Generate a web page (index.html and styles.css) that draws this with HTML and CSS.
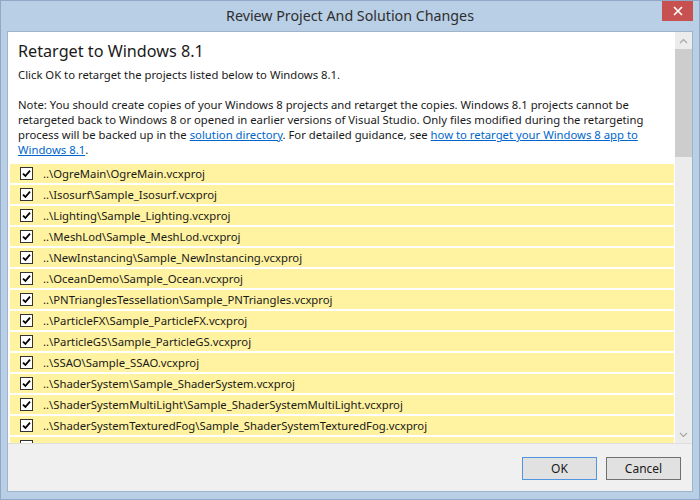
FILE: index.html
```html
<!DOCTYPE html>
<html>
<head>
<meta charset="utf-8">
<link rel="stylesheet" href="styles.css">
</head>
<body>
<div class="window">
  <div class="titlebar">Review Project And Solution Changes</div>
  <div class="close"><svg width="10" height="10" viewBox="0 0 10 10"><path d="M1 1 L9 9 M9 1 L1 9" stroke="#fff" stroke-width="1.7" fill="none"/></svg></div>
  <div class="client">
    <div class="main">
      <div class="content">
        <div class="header">
          <h1 class="heading">Retarget to Windows 8.1</h1>
          <p class="intro">Click OK to retarget the projects listed below to Windows 8.1.</p>
          <p class="note">Note: You should create copies of your Windows 8 projects and retarget the copies. Windows 8.1 projects cannot be<br>retargeted back to Windows 8 or opened in earlier versions of Visual Studio. Only files modified during the retargeting<br>process will be backed up in the <a class="link" href="#">solution directory</a>. For detailed guidance, see <a class="link" href="#">how to retarget your Windows 8 app to</a><br><a class="link" href="#">Windows 8.1</a>.</p>
        </div>
        <div class="list">
          <div class="row"><span class="check"><svg width="11" height="11" viewBox="0 0 11 11"><path d="M2 5.6 L4.4 8 L9 2.6" stroke="#000" stroke-width="1.8" fill="none"/></svg></span><span class="name">..\OgreMain\OgreMain.vcxproj</span></div>
          <div class="row"><span class="check"><svg width="11" height="11" viewBox="0 0 11 11"><path d="M2 5.6 L4.4 8 L9 2.6" stroke="#000" stroke-width="1.8" fill="none"/></svg></span><span class="name">..\Isosurf\Sample_Isosurf.vcxproj</span></div>
          <div class="row"><span class="check"><svg width="11" height="11" viewBox="0 0 11 11"><path d="M2 5.6 L4.4 8 L9 2.6" stroke="#000" stroke-width="1.8" fill="none"/></svg></span><span class="name">..\Lighting\Sample_Lighting.vcxproj</span></div>
          <div class="row"><span class="check"><svg width="11" height="11" viewBox="0 0 11 11"><path d="M2 5.6 L4.4 8 L9 2.6" stroke="#000" stroke-width="1.8" fill="none"/></svg></span><span class="name">..\MeshLod\Sample_MeshLod.vcxproj</span></div>
          <div class="row"><span class="check"><svg width="11" height="11" viewBox="0 0 11 11"><path d="M2 5.6 L4.4 8 L9 2.6" stroke="#000" stroke-width="1.8" fill="none"/></svg></span><span class="name">..\NewInstancing\Sample_NewInstancing.vcxproj</span></div>
          <div class="row"><span class="check"><svg width="11" height="11" viewBox="0 0 11 11"><path d="M2 5.6 L4.4 8 L9 2.6" stroke="#000" stroke-width="1.8" fill="none"/></svg></span><span class="name">..\OceanDemo\Sample_Ocean.vcxproj</span></div>
          <div class="row"><span class="check"><svg width="11" height="11" viewBox="0 0 11 11"><path d="M2 5.6 L4.4 8 L9 2.6" stroke="#000" stroke-width="1.8" fill="none"/></svg></span><span class="name">..\PNTrianglesTessellation\Sample_PNTriangles.vcxproj</span></div>
          <div class="row"><span class="check"><svg width="11" height="11" viewBox="0 0 11 11"><path d="M2 5.6 L4.4 8 L9 2.6" stroke="#000" stroke-width="1.8" fill="none"/></svg></span><span class="name">..\ParticleFX\Sample_ParticleFX.vcxproj</span></div>
          <div class="row"><span class="check"><svg width="11" height="11" viewBox="0 0 11 11"><path d="M2 5.6 L4.4 8 L9 2.6" stroke="#000" stroke-width="1.8" fill="none"/></svg></span><span class="name">..\ParticleGS\Sample_ParticleGS.vcxproj</span></div>
          <div class="row"><span class="check"><svg width="11" height="11" viewBox="0 0 11 11"><path d="M2 5.6 L4.4 8 L9 2.6" stroke="#000" stroke-width="1.8" fill="none"/></svg></span><span class="name">..\SSAO\Sample_SSAO.vcxproj</span></div>
          <div class="row"><span class="check"><svg width="11" height="11" viewBox="0 0 11 11"><path d="M2 5.6 L4.4 8 L9 2.6" stroke="#000" stroke-width="1.8" fill="none"/></svg></span><span class="name">..\ShaderSystem\Sample_ShaderSystem.vcxproj</span></div>
          <div class="row"><span class="check"><svg width="11" height="11" viewBox="0 0 11 11"><path d="M2 5.6 L4.4 8 L9 2.6" stroke="#000" stroke-width="1.8" fill="none"/></svg></span><span class="name">..\ShaderSystemMultiLight\Sample_ShaderSystemMultiLight.vcxproj</span></div>
          <div class="row"><span class="check"><svg width="11" height="11" viewBox="0 0 11 11"><path d="M2 5.6 L4.4 8 L9 2.6" stroke="#000" stroke-width="1.8" fill="none"/></svg></span><span class="name">..\ShaderSystemTexturedFog\Sample_ShaderSystemTexturedFog.vcxproj</span></div>
          <div class="row"><span class="check"><svg width="11" height="11" viewBox="0 0 11 11"><path d="M2 5.6 L4.4 8 L9 2.6" stroke="#000" stroke-width="1.8" fill="none"/></svg></span></div>
        </div>
      </div>
      <div class="scrollbar">
        <div class="sb-btn"><svg width="9" height="6" viewBox="0 0 9 6"><path d="M1 5 L4.5 1.5 L8 5" stroke="#a6a6a6" stroke-width="1.2" fill="none"/></svg></div>
        <div class="thumb"></div>
        <div class="track"></div>
        <div class="sb-btn"><svg width="9" height="6" viewBox="0 0 9 6"><path d="M1 1 L4.5 4.5 L8 1" stroke="#a6a6a6" stroke-width="1.2" fill="none"/></svg></div>
      </div>
    </div>
    <div class="footer">
      <button class="btn btn-default">OK</button>
      <button class="btn">Cancel</button>
    </div>
  </div>
</div>
</body>
</html>
```
FILE: styles.css
```css
* { box-sizing: border-box; }
body {
  margin: 0;
  font-family: "Noto Sans", "Open Sans", sans-serif;
  color: #1a1a1a;
}
.window {
  position: relative;
  width: 700px;
  height: 500px;
  background: #b9cfe6;
  border: 1px solid #8fa9c6;
  padding: 0 6px 7px;
  display: flex;
  flex-direction: column;
}
.titlebar {
  height: 30px;
  flex: none;
  display: flex;
  align-items: center;
  justify-content: center;
  font-size: 14.25px;
  color: #2e2e2e;
  padding-bottom: 1px;
}
.close {
  position: absolute;
  top: 0;
  right: 6px;
  width: 31px;
  height: 20px;
  background: #c75050;
  display: flex;
  align-items: center;
  justify-content: center;
}
.client {
  flex: 1;
  min-height: 0;
  border: 1px solid #9fb3c9;
  background: #fff;
  display: flex;
  flex-direction: column;
}
.main {
  flex: 1;
  min-height: 0;
  display: flex;
  overflow: hidden;
}
.content {
  flex: 1;
  min-width: 0;
  overflow: hidden;
  padding: 0 1px 0 2px;
}
.header {
  padding: 7px 8px 0;
}
.heading {
  margin: 0;
  font-size: 16.2px;
  line-height: 24px;
  font-weight: normal;
  color: #1a1a1a;
}
.intro {
  margin: 4px 0 0;
  font-size: 11.3px;
  line-height: 15px;
}
.note {
  margin: 15px 0 0;
  font-size: 11.3px;
  line-height: 15px;
  white-space: nowrap;
}
.link {
  color: #0066cc;
  text-decoration: underline;
}
.list {
  margin-top: 7px;
}
.row {
  height: 19px;
  margin-bottom: 2px;
  background: #fff2a0;
  display: flex;
  align-items: center;
  padding-left: 10px;
  font-size: 11.3px;
  white-space: nowrap;
}
.check {
  width: 13px;
  height: 13px;
  border: 1px solid #333;
  background: #fff;
  display: flex;
  align-items: center;
  justify-content: center;
  margin-right: 10px;
  flex: none;
}
.scrollbar {
  width: 17px;
  flex: none;
  background: #ececec;
  display: flex;
  flex-direction: column;
}
.sb-btn {
  height: 17px;
  flex: none;
  display: flex;
  align-items: center;
  justify-content: center;
}
.thumb {
  height: 108px;
  flex: none;
  background: #cdcdcd;
}
.track {
  flex: 1;
}
.footer {
  height: 48px;
  flex: none;
  background: #f0f0f0;
  border-top: 1px solid #dedede;
  display: flex;
  justify-content: flex-end;
  align-items: flex-start;
  gap: 9px;
  padding: 13px 11px 0 0;
}
.btn {
  width: 75px;
  height: 23px;
  background: #e1e1e1;
  border: 1px solid #707070;
  font-family: inherit;
  font-size: 12px;
  color: #1a1a1a;
  padding: 0;
}
.btn-default {
  border-color: #4f95e0;
}
```
